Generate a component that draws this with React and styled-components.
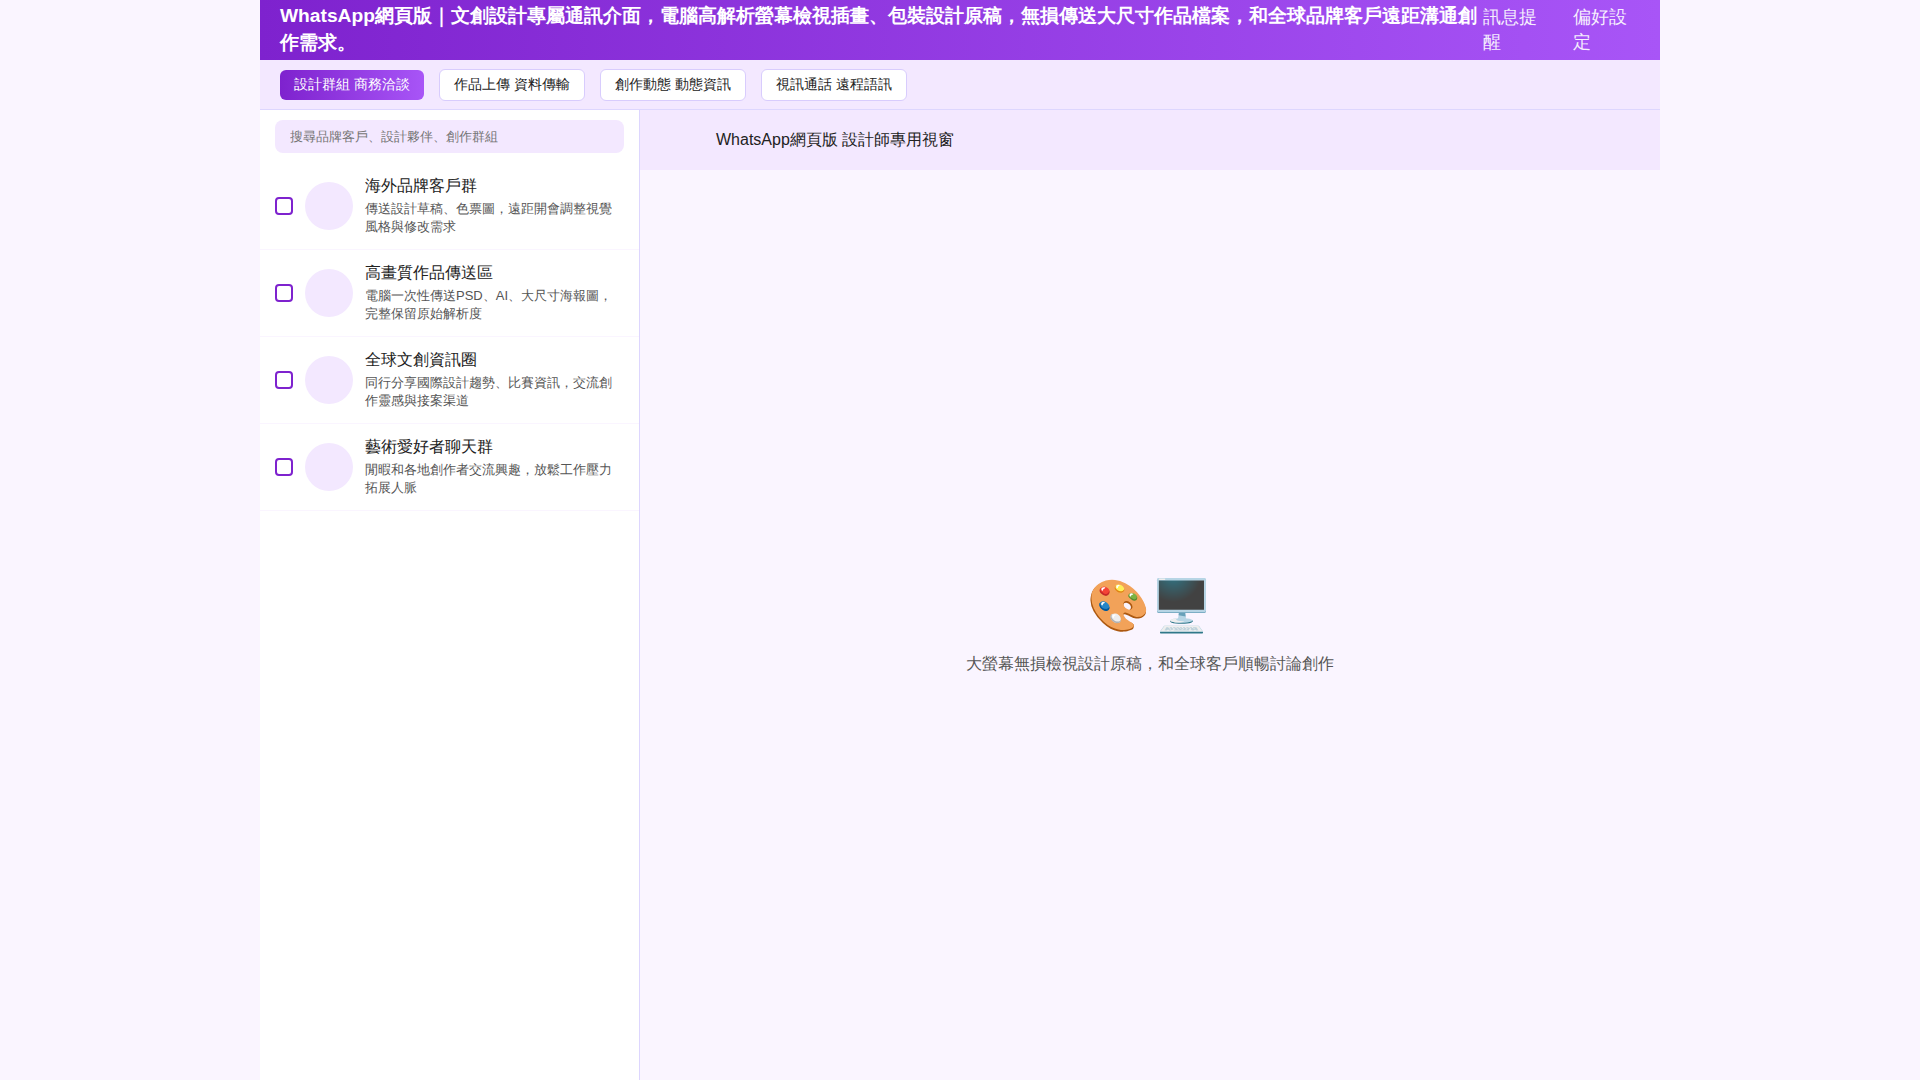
import React from "react";
import styled, { createGlobalStyle } from "styled-components";

const FONT = `"Liberation Sans", sans-serif`;
const Global = createGlobalStyle`
  * { box-sizing: border-box; }
  html, body { margin: 0; padding: 0; }
  body { background: #faf5ff; font-family: ${FONT}; color: #222; }
`;
const Shell = styled.div`
  width: 1400px; height: 1080px; margin: 0 auto; display: flex; flex-direction: column; background: #faf5ff;
`;
const Header = styled.header`
  height: 60px; flex: none; display: flex; align-items: center; justify-content: space-between; gap: 6px; padding: 0 20px;
  background: linear-gradient(90deg, #7e22ce, #a855f7); color: #fff;
`;
const Title = styled.h1`margin: 0; font-size: 19.2px; line-height: 1.4; font-weight: 700;`;
const Nav = styled.nav`display: flex; gap: 23px; flex: none;`;
const NavItem = styled.span`width: 67px; font-size: 18px; line-height: 1.4; opacity: .9;`;
const TabBar = styled.div`
  height: 50px; flex: none; display: flex; align-items: center; gap: 15px; padding: 1px 20px 0;
  background: #f3e8ff; border-bottom: 1px solid #ddd6fe;
`;
const Tab = styled.button`
  padding: 5px 14px 7px; font: 14px/18px ${FONT}; border-radius: 6px; cursor: pointer;
  border: ${p => p.$active ? "none" : "1px solid #d8ccfd"};
  background: ${p => p.$active ? "linear-gradient(90deg, #7e22ce, #a855f7)" : "#fff"};
  color: ${p => p.$active ? "#fff" : "#222"};
`;
const Body = styled.div`flex: 1; display: flex; min-height: 0;`;
const Sidebar = styled.aside`width: 380px; flex: none; background: #fff; border-right: 1px solid #ddd6fe;`;
const SearchWrap = styled.div`padding: 10px 15px;`;
const Search = styled.input`
  display: block; width: 100%; height: 33px; padding: 0 15px; border: 0; border-radius: 8px; outline: none;
  background: #f3e8ff; font: 13px ${FONT};
  &::placeholder { color: #757575; opacity: 1; }
`;
const Row = styled.div`
  height: 87px; display: flex; align-items: center; gap: 12px; padding: 0 15px; border-bottom: 1px solid #faf5ff;
`;
const Check = styled.span`width: 18px; height: 18px; flex: none; border: 2px solid #7e22ce; border-radius: 4px; background: #fff;`;
const Avatar = styled.span`width: 48px; height: 48px; flex: none; border-radius: 50%; background: #f3e8ff;`;
const RowText = styled.div`min-width: 0; flex: 1;`;
const Name = styled.div`font-size: 16px; line-height: 20px; margin-bottom: 4px;`;
const Desc = styled.div`font-size: 13px; line-height: 18px; color: #555;`;
const Main = styled.main`flex: 1; display: flex; flex-direction: column; min-width: 0;`;
const ChatHead = styled.div`height: 60px; flex: none; display: flex; align-items: center; padding: 0 76px; background: #f3e8ff; font-size: 16px;`;
const Empty = styled.div`flex: 1; display: flex; flex-direction: column; align-items: center; justify-content: center; color: #555;`;
const Emoji = styled.div`font-size: 50.6px; line-height: 60px; margin-bottom: 18px;`;
const EmptyText = styled.div`font-size: 16px; line-height: 20px;`;

const tabs = ["設計群組 商務洽談", "作品上傳 資料傳輸", "創作動態 動態資訊", "視訊通話 遠程語訊"];
const rows = [
  ["海外品牌客戶群", "傳送設計草稿、色票圖，遠距開會調整視覺風格與修改需求"],
  ["高畫質作品傳送區", "電腦一次性傳送PSD、AI、大尺寸海報圖，完整保留原始解析度"],
  ["全球文創資訊圈", "同行分享國際設計趨勢、比賽資訊，交流創作靈感與接案渠道"],
  ["藝術愛好者聊天群", "閒暇和各地創作者交流興趣，放鬆工作壓力拓展人脈"],
];

export default function App() {
  return (
    <>
      <Global />
      <Shell>
        <Header>
          <Title>WhatsApp網頁版｜文創設計專屬通訊介面，電腦高解析螢幕檢視插畫、包裝設計原稿，無損傳送大尺寸作品檔案，和全球品牌客戶遠距溝通創作需求。</Title>
          <Nav><NavItem>訊息提醒</NavItem><NavItem>偏好設定</NavItem></Nav>
        </Header>
        <TabBar>{tabs.map((t, i) => <Tab key={t} $active={i === 0}>{t}</Tab>)}</TabBar>
        <Body>
          <Sidebar>
            <SearchWrap><Search placeholder="搜尋品牌客戶、設計夥伴、創作群組" /></SearchWrap>
            {rows.map(([n, d]) => (
              <Row key={n}>
                <Check /><Avatar />
                <RowText><Name>{n}</Name><Desc>{d}</Desc></RowText>
              </Row>
            ))}
          </Sidebar>
          <Main>
            <ChatHead>WhatsApp網頁版 設計師專用視窗</ChatHead>
            <Empty>
              <Emoji>🎨🖥️</Emoji>
              <EmptyText>大螢幕無損檢視設計原稿，和全球客戶順暢討論創作</EmptyText>
            </Empty>
          </Main>
        </Body>
      </Shell>
    </>
  );
}
